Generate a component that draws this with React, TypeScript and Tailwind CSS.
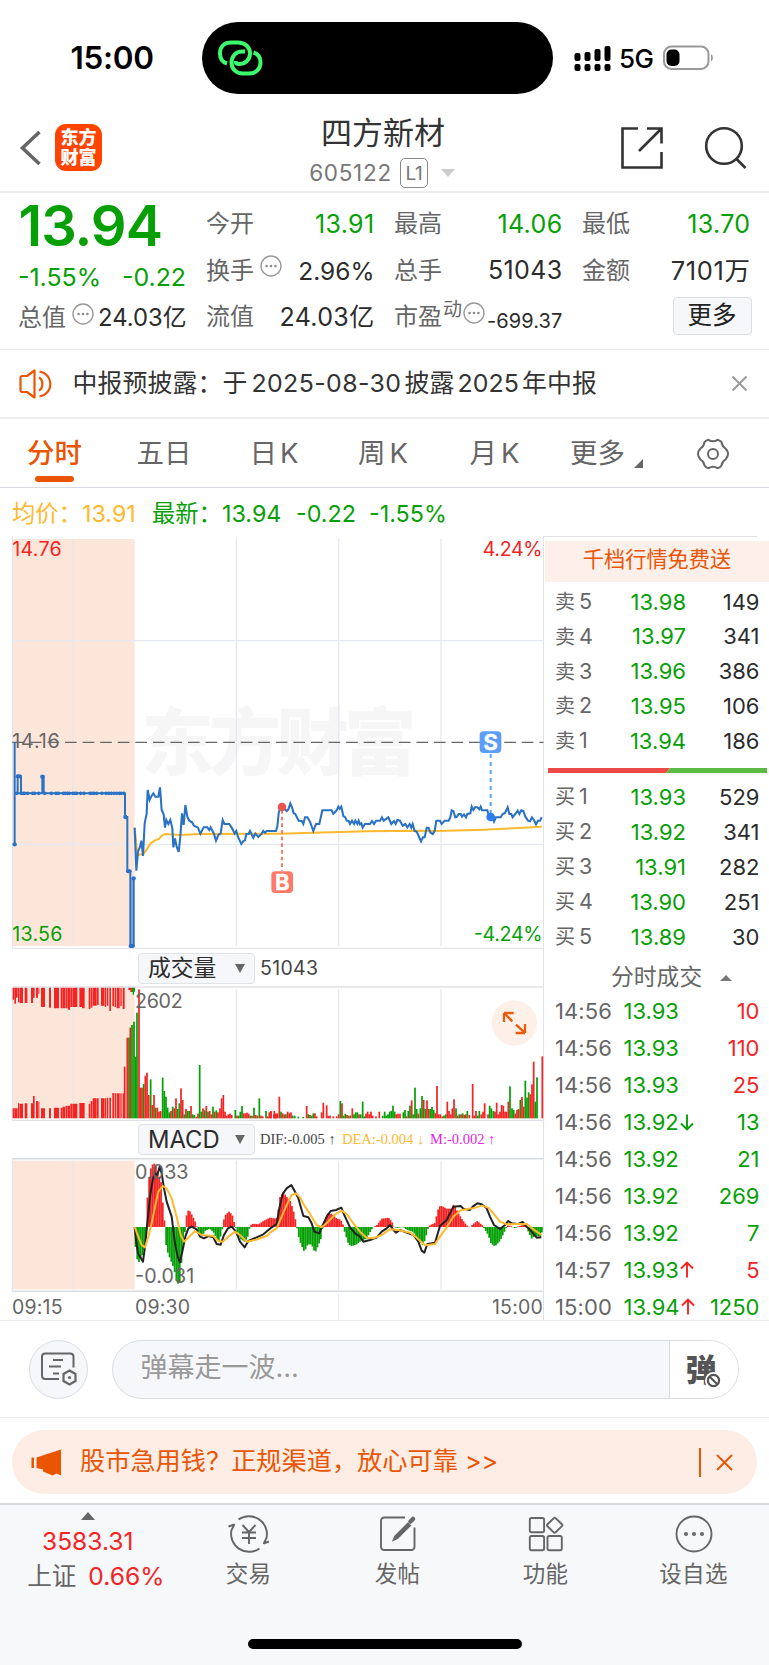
import React from "react";

type Pt = [number, number];

const font = "font-['Inter','Noto_Sans_CJK_SC',sans-serif]";
const svgFont = "Inter, 'Noto Sans CJK SC', sans-serif";

/* Chart geometry: one unit is a third of a pixel. */

const parse = (s: string, dx = 0): Pt[] =>
  s
    .trim()
    .split(/\s+/)
    .map((p) => {
      const [x, y] = p.split(",").map(Number);
      return [x + dx, y] as Pt;
    });

const line = (pts: Pt[]) => pts.map((p) => p.join(",")).join(" ");

const PRICE: Pt[] = [
  ...parse(
    "404,893 409,1022 414,965 420,950 424,932 429,978 434,880 440,850 443,780 449,810 455,797 460,790 466,800 475,800 480,772 485,840 491,853 495,893 499,870 505,882 511,870 517,895 520,952 525,925 530,950 536,966 541,920 546,850 551,885 556,825 562,860 568,872 576,877 582,887 588,890 594,893 601,911 611,892 622,892 628,900 632,892 642,912 648,932 655,915 662,910 668,870 673,882 688,882 698,898 704,911 709,903 714,921 719,931 724,942 730,933 735,931 739,912 746,912 750,903 760,923 766,911 775,921 785,911 790,903 795,908 800,903 828,903"
  ),
  ...parse(
    "22,890 26,850 30,835 36,830 42,835 50,843 55,838 61,820 66,832 71,850 76,852 86,872 95,873 100,882 105,862 112,862 120,875 130,903 138,882 148,882 157,841 185,841 190,851 200,841 205,830 209,836 214,830 220,858 226,862 230,872 236,873 240,882 246,872 252,882 256,872 262,882 266,872 270,883 274,880 278,893 285,882 300,882 306,873 312,882 318,872 330,872 336,862 341,872 355,862 364,882 372,873 377,882 382,870 390,872 398,887 406,882 412,892 419,882 424,893 428,882 434,903 440,905 446,918 453,934 459,922 464,922 470,893 476,893 481,908 488,912 494,903 499,872 510,872 515,882 524,872 536,872 541,862 545,841 550,843 556,862 561,860 566,852 572,852 576,860 582,853 588,862 592,852 601,850 605,830 610,840 615,832 622,832 628,838 632,830 636,841 652,841 657,860 662,862 668,866 672,875 678,862 692,862 698,852 705,849 713,832 718,852 724,852 728,862 736,852 743,842 748,852 754,841 760,843 766,860 774,872 780,874 786,862 792,870 798,883 804,872 810,872 815,862",
    810
  ),
];

const AVERAGE = parse(
  "404,893 411,962 416,975 432,970 440,958 452,940 465,931 478,926 485,917 495,912 540,915 600,912 840,911 940,908 1100,904 1250,902 1310,903 1450,899 1540,895 1625,890"
);

const DIF: Pt[] = [
  ...parse(
    "404,861 408,900 414,940 420,950 429,965 435,920 442,850 450,770 458,720 465,700 472,705 479,680 485,700 492,745 500,785 515,830 525,910 533,950 540,967 548,930 556,890 565,865 575,860 590,868 600,890 612,895 625,888 640,892 650,912 662,914 672,885 684,865 695,860 708,875 720,905 734,922 745,903 770,892 790,883 815,862 830,852"
  ),
  ...parse(
    "28,805 38,762 50,745 64,735 75,755 85,775 100,828 115,832 125,850 133,875 148,880 155,862 170,830 182,813 198,810 214,803 225,830 240,862 255,880 270,890 280,905 300,900 320,893 335,875 350,865 360,855 370,870 378,878 390,870 410,878 430,885 445,905 455,932 463,938 472,912 495,908 510,858 530,840 550,800 572,798 580,806 600,810 608,800 622,790 635,793 650,805 660,830 672,855 690,867 705,855 715,843 725,850 745,852 758,846 770,860 785,875 800,893 814,892",
    810
  ),
];

const DEA: Pt[] = [
  ...parse(
    "404,861 415,890 425,915 435,922 445,890 455,850 465,800 475,755 488,738 500,745 515,775 530,830 542,885 552,905 565,893 585,873 605,885 640,888 655,903 668,905 685,890 705,875 720,885 740,905 765,900 800,888"
  ),
  ...parse(
    "0,878 20,865 35,830 50,795 65,765 78,760 90,772 105,800 120,822 140,855 155,862 175,845 195,823 215,812 230,822 250,850 270,875 290,893 310,895 335,885 360,868 385,870 420,878 440,893 465,916 495,912 510,890 530,862 550,830 570,812 590,807 610,805 635,797 655,803 670,820 690,845 710,853 740,852 770,852 790,868 815,885",
    810
  ),
];

const MACD: Pt[] = [
  ...parse(
    "404,0 407,-70 414,-110 420,-100 425,-90 432,-70 437,-35 440,50 445,135 452,175 460,193 467,185 475,160 483,135 488,75 493,25 496,-40 501,-70 510,-95 520,-120 530,-160 538,-180 544,-110 552,-40 556,0 558,28 563,50 570,47 578,32 588,10 592,-5 600,-22 606,-28 615,-12 628,-5 640,-15 655,-45 665,-20 669,12 675,35 688,47 697,35 705,5 710,-10 720,-35 735,-45 745,-25 750,5 760,10 775,8 790,18 810,28 828,25"
  ),
  ...parse(
    "22,30 30,90 40,105 50,90 60,80 70,50 80,5 83,-20 92,-50 103,-75 112,-55 120,-50 128,-60 135,-78 145,-55 153,-35 160,10 172,40 185,40 200,25 212,22 220,5 224,-15 235,-50 243,-58 260,-52 275,-40 290,-35 303,-10 310,0 320,5 335,25 355,28 365,18 372,0 380,-3 400,0 410,-8 430,-15 450,-45 460,-55 470,-20 476,3 485,8 495,12 503,50 511,65 530,55 545,55 552,70 560,50 575,25 590,5 600,-2 608,8 622,18 637,5 645,-8 655,-25 663,-50 675,-58 690,-42 703,-15 712,5 722,3 735,-4 745,2 765,8 772,-8 785,-35 795,-25 810,-30 818,-10",
    810
  ),
];

const STEP = 5.1;
const RED = "#f42424";
const GREEN = "#06a006";

const valueAt = (pts: Pt[], x: number) => {
  for (let i = 1; i < pts.length; i++) {
    if (x <= pts[i][0]) {
      const [x0, y0] = pts[i - 1];
      const [x1, y1] = pts[i];
      return y0 + ((y1 - y0) * (x - x0)) / (x1 - x0);
    }
  }
  return pts[pts.length - 1][1];
};

const MACD_BARS = Array.from({ length: 240 }, (_, i) => {
  const x = 404 + i * STEP;
  return { x, v: valueAt(MACD, x + STEP / 2) };
});

/* "x,height,colour" of the volume bars */
const peaks = (s: string, dx = 0) =>
  s
    .trim()
    .split(/\s+/)
    .map((p) => {
      const [x, h, c] = p.split(",");
      return { x: Number(x) + dx, h: Number(h), c: c === "g" ? GREEN : RED };
    });

const VOLUME = [
  ...peaks(
    "374,155,r 382,242,r 387,242,g 391,272,r 396,280,g 402,290,g 407,185,g 411,317,g 417,387,r 421,92,r 426,92,r 431,103,g 436,128,r 441,137,r 446,70,r 452,117,g 457,40,r 462,70,r 467,32,g 472,32,r 477,20,r 482,22,r 488,122,g 493,82,g 498,65,g 503,32,g 508,18,g 513,22,r 518,35,g 523,30,r 528,60,r 533,28,g 538,45,g 543,90,r 548,55,r 553,12,g 558,28,r 563,22,g 568,22,g 573,37,r 578,12,g 583,10,g 589,5,r 594,14,r 599,160,g 604,20,g 609,30,r 614,24,g 619,37,r 624,20,g 629,22,r 634,12,r 639,35,g 644,20,r 649,24,g 654,18,r 660,30,r 665,60,r 670,70,r 675,20,r 680,8,r 685,12,r 690,14,r 695,10,r 706,25,g 711,8,r 716,8,g 721,20,g 726,37,g 731,15,r 736,15,r 741,17,r 746,14,r 751,8,g 756,8,r 762,32,g 767,10,r 772,8,r 778,60,g 783,8,r 788,6,r 798,22,g 803,6,r 808,18,r 813,22,r 823,22,r 828,12,r 838,65,r"
  ),
  ...peaks(
    "2,20,r 12,12,r 17,14,r 22,15,r 33,20,g 38,15,r 43,12,r 48,12,g 53,20,r 58,15,r 63,18,r 68,8,g 74,8,g 85,5,g 100,4,g 110,37,r 115,12,g 120,10,r 125,8,g 130,15,g 135,15,r 140,6,r 155,18,r 160,47,r 170,39,r 175,8,r 180,8,r 190,6,r 200,6,r 206,12,r 211,52,g 216,45,r 221,8,g 226,14,g 231,10,r 236,8,g 241,8,r 247,30,r 252,12,g 257,18,g 262,18,g 267,12,r 272,12,g 278,50,g 283,6,g 288,14,r 293,20,r 298,12,r 303,20,r 308,8,r 318,6,r 328,20,r 338,8,g 344,20,g 349,8,g 354,12,g 359,20,g 364,22,g 369,38,g 374,20,g 379,12,r 384,14,r 390,14,r 400,18,g 405,25,g 410,6,r 415,22,g 420,38,g 425,54,r 430,12,g 435,92,g 440,28,g 445,14,r 451,30,g 456,67,g 461,55,r 466,28,g 471,54,r 476,28,r 481,28,g 486,34,g 491,25,g 496,15,r 501,97,r 506,12,r 511,12,r 517,6,r 522,8,g 527,12,g 532,50,r 537,22,r 542,12,r 547,30,r 552,57,r 558,30,g 563,8,r 568,12,g 573,12,r 578,15,g 583,10,r 587,12,r 592,22,g 598,10,r 608,103,r 613,8,r 618,22,r 623,8,g 628,22,g 634,12,r 639,20,r 644,45,r 654,12,r 659,38,g 664,30,g 670,22,g 675,20,r 680,47,r 685,12,r 690,20,r 695,40,r 700,38,r 705,20,r 710,20,r 715,50,r 720,96,g 726,30,g 731,25,g 736,14,r 741,25,r 746,28,r 751,55,g 756,64,r 761,35,r 766,113,g 771,62,g 776,78,g 781,72,r 786,102,r 791,170,r 796,50,g 801,123,g 817,186,r",
    810
  ),
];

/* "x,width,top drop,bottom height" of the call-auction bars */
const AUCTION = "38,5,36,30 43,5,48,30 48,5,30,30 54,4,44,45 59,10,46,44 74,8,46,45 93,6,46,45 99,5,30,67 108,6,30,52 115,3,18,50 123,12,58,30 147,6,60,30 162,15,62,32 182,6,62,32 188,8,62,35 197,6,62,38 204,6,66,38 211,7,58,44 219,13,58,44 238,8,58,46 246,8,62,46 266,5,64,44 272,5,60,52 278,12,54,60 291,5,52,60 303,10,54,60 314,4,58,60 320,5,54,62 328,5,70,62 337,5,56,76 344,4,58,75 350,9,62,75 361,4,56,75 368,6,64,75"
  .split(" ")
  .map((s) => s.split(",").map(Number));

const GRID_X = [709, 1016, 1323];

const AUCTION_DOTS = [50, 64, 70, 74, 83, 98, 104, 116, 134, 154, 168, 175, 190, 196, 202, 208, 218, 224, 230, 242, 252, 270, 276, 282, 290, 306, 318, 326, 334, 342, 350, 358, 364, 372];

function PriceChart() {
  return (
    <svg className="block h-[417px] w-[544px] shrink-0" viewBox="0 18 1632 1251">
      <g fill="none">
        <rect x="37" y="27" width="367" height="1221" fill="#fce6da" />
        <g fontFamily={svgFont} fontWeight="900" fontSize="217" fill="#f6f6f7">
          <text x="424" y="716" textLength="825">东方财富</text>
        </g>
        <g stroke="#e6e9f2" strokeWidth="4">
          <path d="M219 27V1248" stroke="#e8e6e8" />
          {GRID_X.map((x) => (
            <path key={x} d={`M${x} 27V1248`} />
          ))}
          <path d="M37 332H1630M37 943H1630" />
          <path d="M37 18V1255H1630" strokeWidth="3" stroke="#dfe2e8" />
        </g>
        <path d="M37 637H1630" stroke="#666" strokeWidth="4" strokeDasharray="35 17.7" />
        <polyline points={line(AVERAGE)} stroke="#ffb92e" strokeWidth="6" />
        <g stroke="#2b72c4" strokeWidth="6">
          <rect x="392" y="1045" width="9" height="203" fill="#a5b2cf" stroke="none" />
          <path d="M44 637V943M53 790V739H63V790M48 790H372M127 790V739H131V790M375 790V861H382V1024H391V1248H401V1045H405" />
          <polyline points={line(PRICE)} strokeWidth="6.2" />
        </g>
        <g fill="#2b72c4">
          {AUCTION_DOTS.map((x) => (
            <circle key={x} cx={x} cy="790" r="5.5" />
          ))}
          <circle cx="44" cy="943" r="6.500" />
          <rect x="47" y="733" width="18" height="12" rx="6" />
          <circle cx="127" cy="740" r="6.500" />
          <circle cx="376" cy="861" r="6.500" />
          <rect x="378" y="1018" width="17" height="12" rx="6" />
          <rect x="386" y="1242" width="18" height="12" rx="5" />
          <circle cx="401" cy="1045" r="6.500" />
        </g>
        <path d="M846 840V1022" stroke="#ff7765" strokeWidth="6" strokeDasharray="11 9" />
        <circle cx="846" cy="831" r="13" fill="#e5544d" />
        <rect x="814" y="1024" width="65" height="65" rx="12" fill="#ff7868" />
        <path d="M1472 672V850" stroke="#5aa0ff" strokeWidth="6" strokeDasharray="12 12" />
        <circle cx="1472" cy="861" r="13" fill="#2d7cf0" />
        <rect x="1439" y="604" width="65" height="65" rx="12" fill="#5c9dfa" />
        <g fontFamily={svgFont} fill="#fff" stroke="#fff" strokeWidth="2" fontSize="66" fontWeight="600" textAnchor="middle">
          <text x="847" y="1080">B</text>
          <text x="1472" y="660">S</text>
        </g>
        <g fontFamily={svgFont} fontSize="59">
          <text x="37" y="77" fill="#f42424" textLength="148">14.76</text>
          <text x="37" y="655" fill="#666" textLength="142">14.16</text>
          <text x="37" y="1233" fill="#06a006" textLength="150">13.56</text>
          <text x="1448" y="77" fill="#f42424" textLength="180">4.24%</text>
          <text x="1421" y="1233" fill="#06a006" textLength="207">-4.24%</text>
        </g>
      </g>
    </svg>
  );
}

function VolumeChart() {
  return (
    <svg className="block h-[135px] w-[544px] shrink-0" viewBox="0 138 1632 405">
      <rect x="37" y="147" width="367" height="388" fill="#fce6da" />
      <g stroke="#e6e9f2" strokeWidth="4" fill="none">
        <path d="M219 147V535" stroke="#e8e6e8" />
        {GRID_X.map((x) => (
          <path key={x} d={`M${x} 147V535`} />
        ))}
        <path d="M37 141H1630M37 541H1630" stroke="#dfe2e8" />
        <path d="M37 141V541" strokeWidth="3" stroke="#dfe2e8" />
      </g>
      <g fill={RED}>
        {AUCTION.map(([x, w, top, h]) => (
          <path key={x} d={`M${x} 143h${w}v${top}h${-w}zM${x} 535h${w}v${-h}h${-w}z`} />
        ))}
        <path d="M385 143H396V156H391V150H385Z" />
      </g>
      <path d="M396 143H405V155H402V164H398V156H396Z" fill={GREEN} />
      {VOLUME.map((b, i) => (
        <rect key={i} x={b.x - 2.6} y={535 - b.h} width="5.2" height={b.h} fill={b.c} />
      ))}
      <text x="405" y="205" fontFamily={svgFont} fontSize="59" fill="#666" textLength="143">2602</text>
      <circle cx="1543" cy="249" r="68" fill="#fdf0e9" />
      <path d="M1512 219V246M1512 219H1541M1512 219L1537 244M1575 252V279M1575 279H1547M1575 279L1548 254" stroke="#ea5b0c" strokeWidth="7" fill="none" />
    </svg>
  );
}

function MacdChart() {
  return (
    <svg className="block h-[134px] w-[544px] shrink-0" viewBox="0 654 1632 402">
      <rect x="37" y="662" width="367" height="386" fill="#fce6da" />
      <g stroke="#e6e9f2" strokeWidth="4" fill="none">
        <path d="M219 662V1048" stroke="#e8e6e8" />
        {GRID_X.map((x) => (
          <path key={x} d={`M${x} 662V1048`} />
        ))}
        <path d="M37 656H1630M37 1054H1630" stroke="#d8dbe0" strokeWidth="5" />
        <path d="M37 656V1054" strokeWidth="3" stroke="#dfe2e8" />
      </g>
      {MACD_BARS.map(({ x, v }) => (
        <rect key={x} x={x} y={v > 0 ? 861 - v : 861} width="5.3" height={Math.abs(v)} fill={v > 0 ? RED : GREEN} />
      ))}
      <polyline points={line(DIF)} fill="none" stroke="#222" strokeWidth="6" strokeLinejoin="round" />
      <polyline points={line(DEA)} fill="none" stroke="#ffb92e" strokeWidth="6" strokeLinejoin="round" />
      <g fontFamily={svgFont} fontSize="59" fill="#666">
        <text x="405" y="718" textLength="160">0.033</text>
        <text x="405" y="1029" textLength="178">-0.031</text>
      </g>
    </svg>
  );
}

function Dots({ className = "" }: { className?: string }) {
  return (
    <svg className={`h-[22px] w-[22px] shrink-0 ${className}`} viewBox="0 0 22 22">
      <circle cx="11" cy="11" r="10" fill="none" stroke="#999" strokeWidth="1.4" />
      <g fill="#888">
        <circle cx="6.6" cy="11" r="1.3" />
        <circle cx="11" cy="11" r="1.3" />
        <circle cx="15.4" cy="11" r="1.3" />
      </g>
    </svg>
  );
}

function StatusBar() {
  return (
    <div className="flex h-[116px] shrink-0 items-center">
      <div className="ml-[70.500px] w-[131.500px] text-[31.500px] font-semibold leading-none tracking-[-0.3px] text-black">15:00</div>
      <div className="flex h-[72px] w-[350.500px] items-center rounded-full bg-black pl-[15px]">
        <svg className="h-[38px] w-[46px]" viewBox="0 0 46 38" fill="none" stroke="#3cfa6c" strokeWidth="4" strokeLinecap="butt">
          <path d="M10 24.5C5 23 3 19 3 14.500C3 7 8 3.500 14 3.500H21C28 3.500 33 8 33 14.500C33 21 28 25 22 25C19.500 25 18.500 24 18.500 22" />
          <path d="M28 12.500H25C19 12.500 14.500 17 14.500 23.500C14.500 30 19 34.500 26 34.500H32C39 34.500 43.500 30 43.500 23.500C43.500 18 41 15 36.500 13.500" />
        </svg>
      </div>
      <svg className="ml-[21.500px] h-[27px] w-[38px]" viewBox="0 0 38 27" fill="#000">
        <rect x="0.500" y="8" width="6" height="8" rx="2" />
        <rect x="10.500" y="7" width="6" height="9" rx="2" />
        <rect x="20.500" y="4" width="6" height="12" rx="2" />
        <rect x="30.500" y="1" width="6" height="15" rx="2" />
        <rect x="0.500" y="19" width="6" height="7" rx="2" />
        <rect x="10.500" y="19" width="6" height="7" rx="2" />
        <rect x="20.500" y="19" width="6" height="7" rx="2" />
        <rect x="30.500" y="19" width="6" height="7" rx="2" />
      </svg>
      <div className="ml-[7px] mt-[2px] w-[44px] text-[26px] font-medium leading-none tracking-[-0.5px] text-black">5G</div>
      <svg className="h-[26px] w-[52px]" viewBox="0 0 52 26">
        <rect x="1" y="1.500" width="44.500" height="22.500" rx="7.500" fill="none" stroke="#999" strokeWidth="2" />
        <rect x="3.500" y="4.500" width="13" height="16.500" rx="5" fill="#000" />
        <path d="M48 9C50.500 10.500 50.500 15 48 16.500Z" fill="#999" />
      </svg>
    </div>
  );
}

function Header() {
  return (
    <div className="flex h-[77px] shrink-0 items-center border-b-2 border-[#ededed] pb-[12px]">
      <svg className="ml-[19px] h-[36px] w-[24px]" viewBox="0 0 24 36" fill="none" stroke="#666" strokeWidth="3.600">
        <path d="M20.500 2L3.500 18L20.500 34" />
      </svg>
      <div className="ml-[12px] flex h-[47px] w-[47px] flex-col items-center justify-center rounded-[11px] bg-[#ff4400] text-[18px] font-black leading-[19.500px] text-white">
        <span>东方</span>
        <span>财富</span>
      </div>
      <div className="ml-[204px] flex w-[154px] flex-col items-center">
        <div className="mt-[8px] whitespace-nowrap text-[31px] leading-[36px] text-[#333]">四方新材</div>
        <div className="mr-[2px] mt-[7px] flex h-[30px] items-center whitespace-nowrap leading-none text-[#777]">
          <span className="text-[22.500px] tracking-[0.7px]">605122</span>
          <span className="ml-[8px] flex h-[30px] w-[28px] items-center justify-center rounded-[5px] border-[1.500px] border-[#888] text-[19px] tracking-[-0.5px]">L1</span>
          <svg className="ml-[13px] h-[8px] w-[14px]" viewBox="0 0 14 8">
            <path d="M0 0H14L7 8Z" fill="#ccc" />
          </svg>
        </div>
      </div>
      <svg className="ml-[160px] h-[44px] w-[44px]" viewBox="0 0 44 44" fill="none" stroke="#333" strokeWidth="2.600">
        <path d="M18 2.500H2.500V41.500H41.500V26M27 2.500H41.500V17.500M41.500 2.500L19 25" />
      </svg>
      <svg className="ml-[40px] h-[44px] w-[44px]" viewBox="0 0 44 44" fill="none" stroke="#333" strokeWidth="2.600">
        <circle cx="20" cy="20" r="17.800" />
        <path d="M32.500 33L41.500 42" />
      </svg>
    </div>
  );
}

function Quote({ label, value, green, children, size = "text-[25px] tracking-[0.35px]" }: { label: string; value: string; green?: boolean; children?: React.ReactNode; size?: string }) {
  return (
    <div className="flex h-[46.500px] items-center justify-between">
      <div className="flex items-center text-[24px] text-[#666]">
        {label}
        {children}
      </div>
      <span className={`${size} ${green ? "text-[#06a006]" : "text-[#2c2c2c]"}`}>{value}</span>
    </div>
  );
}

function Summary() {
  return (
    <div className="grid h-[157px] shrink-0 grid-cols-4 gap-x-[19.500px] whitespace-nowrap border-b-[1.500px] border-[#e2e2e4] pl-[18px] pr-[18.500px] leading-none">
      <div className="flex flex-col pt-[2px]">
        <div className="ml-[0.500px] flex h-[62px] items-center text-[56px] font-semibold tracking-[-1px] text-[#06a006]">13.94</div>
        <div className="flex h-[40px] items-center justify-between pr-[0.500px] text-[24.900px] text-[#06a006]">
          <span>-1.55%</span>
          <span>-0.22</span>
        </div>
        <div className="flex h-[41px] items-center justify-between text-[24px] text-[#666]">
          总值
          <Dots className="mb-[8px] ml-[6px]" />
          <span className="ml-auto text-[23.800px] text-[#2c2c2c]">24.03亿</span>
        </div>
      </div>
      <div className="pt-[8px]">
        <Quote label="今开" value="13.91" green />
        <Quote label="换手" value="2.96%" size="text-[24.500px]">
          <Dots className="mb-[10px] ml-[6px]" />
        </Quote>
        <Quote label="流值" value="24.03亿" />
      </div>
      <div className="pt-[8px]">
        <Quote label="最高" value="14.06" green />
        <Quote label="总手" value="51043" />
        <Quote label="市盈" value="-699.37" size="mt-[7px] text-[20px] tracking-[0.1px]">
          <span className="mb-[15px] ml-[1px] text-[19px]">动</span>
          <Dots className="mb-[8px] ml-[1px]" />
        </Quote>
      </div>
      <div className="flex flex-col pt-[8px]">
        <Quote label="最低" value="13.70" green />
        <Quote label="金额" value="7101万" size="text-[25.500px] tracking-[0.6px]" />
        <div className="mr-[-1px] mt-[2.500px] flex h-[38px] w-[79px] items-center justify-center self-end rounded-[4px] border-[1.500px] border-[#d9dde6] bg-[#f6f7fa] text-[24.500px] text-[#222]">更多</div>
      </div>
    </div>
  );
}

function Notice() {
  return (
    <div className="flex h-[69px] shrink-0 items-center border-b-2 border-[#ededed] pl-[18.500px] pr-[21px]">
      <svg className="h-[30px] w-[34px]" viewBox="0 0 34 30" fill="none" stroke="#ea5504" strokeWidth="2.200" strokeLinejoin="round">
        <path d="M15.500 1.500V28.500L8 23H3.500Q1.500 23 1.500 21V9Q1.500 7 3.500 7H8Z" />
        <path d="M20 8.500C24.500 11 24.500 19 20 21.500M20.500 2.500C35 5 35 25 20.500 27.500" />
      </svg>
      <div className="ml-[20px] whitespace-nowrap text-[24.900px] leading-none tracking-[0.1px] text-[#333]">
        中报预披露：于<span className="ml-[4px] mr-[3px] tracking-[0.4px]">2025-08-30</span>披露<span className="mx-[3px]">2025</span>年中报
      </div>
      <svg className="ml-auto h-[17px] w-[17px]" viewBox="0 0 17 17" stroke="#999" strokeWidth="2">
        <path d="M1.500 1.500L15.500 15.500M15.500 1.500L1.500 15.500" />
      </svg>
    </div>
  );
}

function Tabs() {
  return (
    <div className="flex h-[69px] shrink-0 items-center whitespace-nowrap border-b-[1.500px] border-[#d8d9e2] pt-[1px] text-[27.500px] leading-none text-[#666]">
      <div className="relative ml-[27px] w-[109.500px] font-medium text-[#ea5504]">
        分时
        <span className="absolute -bottom-[15px] left-[8px] h-[6px] w-[39px] rounded-[3px] bg-[#ea5504]" />
      </div>
      <div className="w-[113px]">五日</div>
      <div className="w-[108.500px]">日<span className="ml-[3px]">K</span></div>
      <div className="w-[111.500px]">周<span className="ml-[4px]">K</span></div>
      <div className="w-[100.500px]">月<span className="ml-[4px]">K</span></div>
      <div className="flex w-[127px] items-center">
        更多
        <svg className="ml-[9px] mt-[19px] h-[9px] w-[9px]" viewBox="0 0 9 9">
          <path d="M9 0V9H0Z" fill="#666" />
        </svg>
      </div>
      <svg className="h-[32px] w-[32px]" viewBox="0 0 32 32" fill="none" stroke="#666" strokeWidth="2">
        <path strokeLinejoin="round" d="M11.500 1.800Q16 4.500 20.500 1.800Q24 3 24.500 4.200Q25 8.500 28.500 10.500Q31.500 14 31 16Q31 19 28.500 21.500Q25 23.500 24.500 27.500Q23 30 20.500 30.200Q16 27.500 11.500 30.200Q9 30 7.500 27.500Q7 23.500 3.500 21.500Q1 19 1 16Q1 13 3.500 10.500Q7 8.500 7.500 4.200Q9 2.200 11.500 1.800Z" />
        <circle cx="16" cy="16" r="5" />
      </svg>
    </div>
  );
}

function Select({ label, className }: { label: string; className: string }) {
  return (
    <div className={`ml-[138px] flex h-[31px] w-[117px] items-center justify-between rounded-[4px] border-[1.500px] border-[#dfe2e8] bg-[#f6f7fa] pl-[9px] pr-[9px] text-[#2c2c2c] ${className}`}>
      {label}
      <svg className="h-[9px] w-[10px]" viewBox="0 0 10 9">
        <path d="M0 0H10L5 9Z" fill="#666" />
      </svg>
    </div>
  );
}

function Charts() {
  return (
    <div className="flex w-[544px] flex-col border-r-[1.500px] border-[#dfe2e8] whitespace-nowrap leading-none">
      <PriceChart />
      <div className="flex h-[33px] shrink-0 items-center pb-[2px]">
        <Select label="成交量" className="text-[22.800px]" />
        <span className="ml-[5px] text-[19.500px] tracking-[0.3px] text-[#444]">51043</span>
      </div>
      <VolumeChart />
      <div className="flex h-[37px] shrink-0 items-center">
        <Select label="MACD" className="text-[23.800px]" />
        <div className="ml-[5px] flex font-['Liberation_Serif',serif] text-[14.500px]">
          <span className="w-[82px] text-[#444]">DIF:-0.005 ↑</span>
          <span className="w-[88px] text-[#ffb92e]">DEA:-0.004 ↓</span>
          <span className="text-[#e61ee6]">M:-0.002 ↑</span>
        </div>
      </div>
      <MacdChart />
      <div className="flex h-[28px] shrink-0 items-center pl-[12px] pt-[3px] text-[19.500px] tracking-[0.2px] text-[#666]">
        <span className="w-[123px]">09:15</span>
        <span className="w-[203px]">09:30</span>
        <span className="h-[28px] w-px bg-[#e6e9f2]" />
        <span className="ml-auto">15:00</span>
      </div>
    </div>
  );
}

const SELL = [["卖", "5", "13.98", "149"], ["卖", "4", "13.97", "341"], ["卖", "3", "13.96", "386"], ["卖", "2", "13.95", "106"], ["卖", "1", "13.94", "186"]];
const BUY = [["买", "1", "13.93", "529"], ["买", "2", "13.92", "341"], ["买", "3", "13.91", "282"], ["买", "4", "13.90", "251"], ["买", "5", "13.89", "30"]];

const TRADES = [
  ["14:56", "13.93", "", "10", "r"],
  ["14:56", "13.93", "", "110", "r"],
  ["14:56", "13.93", "", "25", "r"],
  ["14:56", "13.92", "down", "13", "g"],
  ["14:56", "13.92", "", "21", "g"],
  ["14:56", "13.92", "", "269", "g"],
  ["14:56", "13.92", "", "7", "g"],
  ["14:57", "13.93", "up", "5", "r"],
  ["15:00", "13.94", "up", "1250", "g"],
];

function BookRows({ rows }: { rows: string[][] }) {
  return (
    <>
      {rows.map(([side, level, price, qty]) => (
        <div key={side + level} className="flex h-[34.900px] items-center pl-[11px] pr-[9.500px]">
          <span className="w-[47px] text-[20px] text-[#666]">{side}<span className="ml-[4px] text-[21.500px]">{level}</span></span>
          <span className="w-[84px] text-right text-[#06a006]">{price}</span>
          <span className="ml-auto text-[#2c2c2c]">{qty}</span>
        </div>
      ))}
    </>
  );
}

function OrderBook() {
  return (
    <div className="flex w-[225px] flex-col whitespace-nowrap text-[22px] leading-none">
      <div className="mr-[12px] shrink-0 border-t-[1.500px] border-[#dfe2e8]" />
      <div className="ml-px mt-[3.500px] flex h-[41px] shrink-0 items-center justify-center bg-[#fdf0ea] pb-[3px] text-[21.200px] text-[#ea5504]">千档行情免费送</div>
      <div className="mt-[2.600px] shrink-0">
        <BookRows rows={SELL} />
      </div>
      <svg className="ml-[4px] mt-[9.500px] h-[5px] w-[219px] shrink-0" viewBox="0 0 219 5">
        <path d="M0 0H122L118 5H0Z" fill="#ee4a48" />
        <path d="M122 0H219V5H118Z" fill="#5cb943" />
      </svg>
      <div className="mt-[6.500px] shrink-0">
        <BookRows rows={BUY} />
      </div>
      <div className="flex h-[39px] shrink-0 items-center pl-[67px] pt-[8px] text-[22.800px] text-[#666]">
        分时成交
        <svg className="ml-[18px] h-[6px] w-[12px]" viewBox="0 0 12 6">
          <path d="M0 6L6 0L12 6Z" fill="#777" />
        </svg>
      </div>
      {TRADES.map(([time, price, dir, qty, tone], i) => (
        <div key={i} className="flex h-[36.900px] shrink-0 items-center pl-[11px] pr-[9.500px]">
          <span className="w-[68.500px] tracking-[0.1px] text-[#666]">{time}</span>
          <span className="text-[#06a006]">{price}</span>
          {dir && (
            <svg className="ml-px h-[17px] w-[14px]" viewBox="0 0 14 17" fill="none" strokeWidth="1.900" stroke={dir === "up" ? "#f42424" : "#06a006"}>
              <path d={dir === "up" ? "M7 16.500V2M1 7.500L7 1.500L13 7.500" : "M7 0.500V15M1 9.500L7 15.500L13 9.500"} />
            </svg>
          )}
          <span className={`ml-auto ${tone === "r" ? "text-[#f42424]" : "text-[#06a006]"}`}>{qty}</span>
        </div>
      ))}
    </div>
  );
}

function ChatBar() {
  return (
    <div className="flex h-[98px] shrink-0 items-center border-y-[1.500px] border-[#ececec]">
      <div className="ml-[29px] flex h-[59px] w-[59px] items-center justify-center rounded-full border-[1.500px] border-[#d9dce2] bg-[#f6f7fa]">
        <svg className="h-[34px] w-[37px]" viewBox="0 0 37 34" fill="none" stroke="#666" strokeWidth="2">
          <path d="M19 27H5.500Q2 27 2 23.500V4.500Q2 1.500 5.500 1.500H30Q33.500 1.500 33.500 4.500V15.500" />
          <path d="M13 8H23M9 14.500H21M13 21.500H19" />
          <path d="M29.500 18.500L35.500 22V29L29.500 32.500L23.500 29V22Z" strokeWidth="2.200" />
          <circle cx="29.500" cy="25.500" r="1.600" fill="#666" stroke="none" />
        </svg>
      </div>
      <div className="ml-[23.500px] flex h-[59px] w-[627px] overflow-hidden rounded-full border-[1.500px] border-[#d9dce2] bg-[#f6f7fa] leading-none">
        <div className="flex w-[556px] items-center pb-[4px] pl-[28px] text-[27px] text-[#999]">弹幕走一波...</div>
        <div className="flex flex-1 items-center border-l-[1.500px] border-[#d9dce2] bg-white pl-[16px]">
          <div className="relative text-[31px] font-black text-[#555]">
            弹
            <svg className="absolute -bottom-[4px] -right-[5px] h-[17px] w-[17px]" viewBox="0 0 17 17">
              <circle cx="8.500" cy="8.500" r="8.500" fill="#fff" />
              <circle cx="8.500" cy="8.500" r="5.600" fill="#fff" stroke="#555" strokeWidth="2.200" />
              <path d="M4.500 4.500L12.500 12.500" stroke="#555" strokeWidth="2.200" />
            </svg>
          </div>
        </div>
      </div>
    </div>
  );
}

function Promo() {
  return (
    <div className="flex h-[85px] shrink-0 px-[12px] pt-[12px]">
      <div className="flex h-[64px] w-full items-center rounded-full bg-[#fdede5] pl-[18.500px] pr-[24.500px] text-[#ea5504]">
        <svg className="h-[27px] w-[31px]" viewBox="0 0 31 27" fill="#ea5504">
          <path d="M0.500 8.500H3V19H0.500ZM5.500 8.500L30 0.500V26.500L25.500 24.500L21.500 26.500L12 22.500V20.500L5.500 19Z" />
        </svg>
        <span className="ml-[18.500px] whitespace-nowrap text-[25.200px] leading-none">股市急用钱？正规渠道，放心可靠 &gt;&gt;</span>
        <span className="ml-auto h-[29px] w-[1.500px] bg-[#ea5504]" />
        <svg className="ml-[15px] h-[17px] w-[17px]" viewBox="0 0 17 17" stroke="#ea5504" strokeWidth="1.800">
          <path d="M1 1L16 16M16 1L1 16" />
        </svg>
      </div>
    </div>
  );
}

function NavItem({ label, className, children }: { label: string; className: string; children: React.ReactNode }) {
  return (
    <div className={`flex flex-col items-center ${className}`}>
      <svg className="h-[42px] w-[46px]" viewBox="0 0 46 42" fill="none" stroke="#666" strokeWidth="1.900">
        {children}
      </svg>
      <span className="mt-[5px] whitespace-nowrap text-[22.500px] leading-[30px] tracking-[0.3px] text-[#666]">{label}</span>
    </div>
  );
}

function BottomNav() {
  return (
    <div className="flex h-[162px] shrink-0 flex-col border-t-2 border-[#d7d9dc] bg-[#f6f8fa]">
      <div className="flex pt-[7px] leading-none">
        <div className="flex w-[175.500px] flex-col items-center whitespace-nowrap text-[24.600px]">
          <svg className="h-[8px] w-[14px]" viewBox="0 0 14 8">
            <path d="M0 8L7 0L14 8Z" fill="#666" />
          </svg>
          <span className="mt-[9px] text-[#f42424]">3583.31</span>
          <span className="ml-[16px] mt-[10px] text-[#666]">上证<span className="ml-[12px] text-[#f42424]">0.66%</span></span>
        </div>
        <NavItem label="交易" className="w-[146px]">
          <path d="M12.500 7.500A18 18 0 0 1 40.500 26L37.500 32M37.500 31.500L43 29.500M33.500 36.500A18 18 0 0 1 5.500 18L8.500 12M8.500 12.500L2.500 14.500" />
          <path d="M16.500 13L23 20L29.500 13M16 20.500H30M16 26H30M23 20V32" />
        </NavItem>
        <NavItem label="发帖" className="ml-[3px] w-[146px]">
          <path d="M30 5.500H9.500Q6 5.500 6 9V34.500Q6 38 9.500 38H36Q39.500 38 39.500 34.500V15.500" />
          <path d="M33 11L35.500 13.500L22.500 26.500L18 28.500L20 24Z" fill="#666" strokeWidth="1.200" />
          <path d="M35.500 9.500L38 7" strokeWidth="4.500" strokeLinecap="round" />
        </NavItem>
        <NavItem label="功能" className="ml-[2px] w-[146px]">
          <rect x="6.800" y="6" width="14.300" height="14.300" rx="1.800" />
          <rect x="6.800" y="24" width="14.300" height="14.300" rx="1.800" />
          <rect x="24.500" y="24" width="14.300" height="14.300" rx="1.800" />
          <path d="M30.700 6.300Q31.700 5.300 32.700 6.300L38.900 12.200Q39.900 13.200 38.900 14.200L32.700 20.300Q31.700 21.300 30.700 20.300L24.500 14.200Q23.500 13.200 24.500 12.200Z" />
        </NavItem>
        <NavItem label="设自选" className="ml-[2px] w-[146px]">
          <circle cx="23" cy="22" r="17.500" />
          <g fill="#666" stroke="none">
            <circle cx="15" cy="22" r="2" />
            <circle cx="23" cy="22" r="2" />
            <circle cx="31" cy="22" r="2" />
          </g>
        </NavItem>
      </div>
      <div className="mb-[16px] mt-auto h-[10px] w-[274px] self-center rounded-full bg-black" />
    </div>
  );
}

export default function App() {
  return (
    <div className={`flex h-[1665px] w-[769px] flex-col overflow-hidden bg-white ${font}`}>
      <StatusBar />
      <Header />
      <Summary />
      <Notice />
      <Tabs />
      <div className="flex h-[48px] shrink-0 items-center whitespace-nowrap pl-[12px] pt-[3px] text-[23.300px] leading-none">
        <span className="w-[70px] text-[#ffb92e]">均价：</span>
        <span className="w-[70px] text-[#ffb92e]">13.91</span>
        <span className="w-[70px] text-[#06a006]">最新：</span>
        <span className="w-[74px] text-[#06a006]">13.94</span>
        <span className="w-[73px] text-[#06a006]">-0.22</span>
        <span className="text-[#06a006]">-1.55%</span>
      </div>
      <div className="flex h-[784px] shrink-0 overflow-hidden">
        <Charts />
        <OrderBook />
      </div>
      <ChatBar />
      <Promo />
      <BottomNav />
    </div>
  );
}
